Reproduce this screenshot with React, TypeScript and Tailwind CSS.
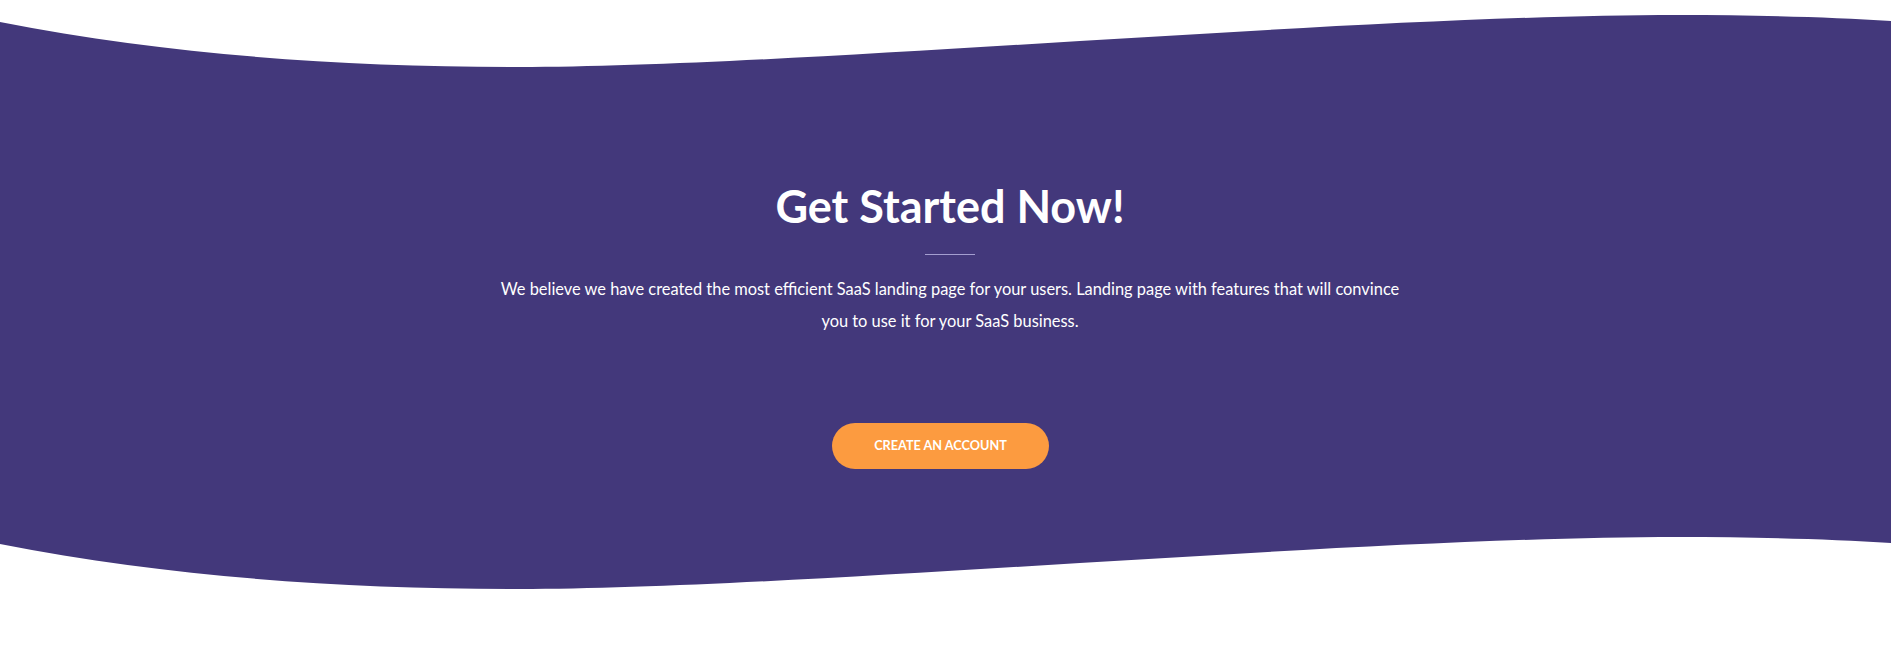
export default function App() {
  return (
    <div className="w-full bg-white" style={{ fontFamily: 'Lato, "Open Sans", sans-serif' }}>
      {/* top wave */}
      <svg className="block h-[70px] w-full" viewBox="0 0 1891 70" preserveAspectRatio="none">
        <path
          d="M0,22 C170,55 340,67 519,67 C800,67 1350,15 1677,15 C1760,15 1830,17 1891,21 L1891,70 L0,70 Z"
          fill="#43387b"
        />
      </svg>

      <section className="bg-[#43387b] h-[467px] flex flex-col items-center">
        <div className="flex flex-col items-center pl-[9px]">
          <h1 className="mt-[109px] text-[45px] leading-[54px] font-bold text-white">Get Started Now!</h1>
          <div className="mt-[21px] h-px w-[50px] bg-[#a49ed0]" />
          <p className="mt-[18px] text-center text-[16.4px] leading-[32px] text-white">
            We believe we have created the most efficient SaaS landing page for your users. Landing page with features that will convince
            <br />
            you to use it for your SaaS business.
          </p>
        </div>
        <button className="mt-[86px] mr-[10px] h-[46px] w-[217px] rounded-full bg-[#fc9b40] text-[12.7px] font-bold uppercase text-white">
          Create an account
        </button>
      </section>

      {/* bottom wave */}
      <svg className="block h-[53px] w-full" viewBox="0 0 1891 53" preserveAspectRatio="none">
        <path
          d="M0,0 L1891,0 L1891,6 C1830,2 1760,0 1677,0 C1350,0 800,52 519,52 C340,52 170,40 0,7 Z"
          fill="#43387b"
        />
      </svg>
      <div className="h-[61px]" />
    </div>
  );
}
